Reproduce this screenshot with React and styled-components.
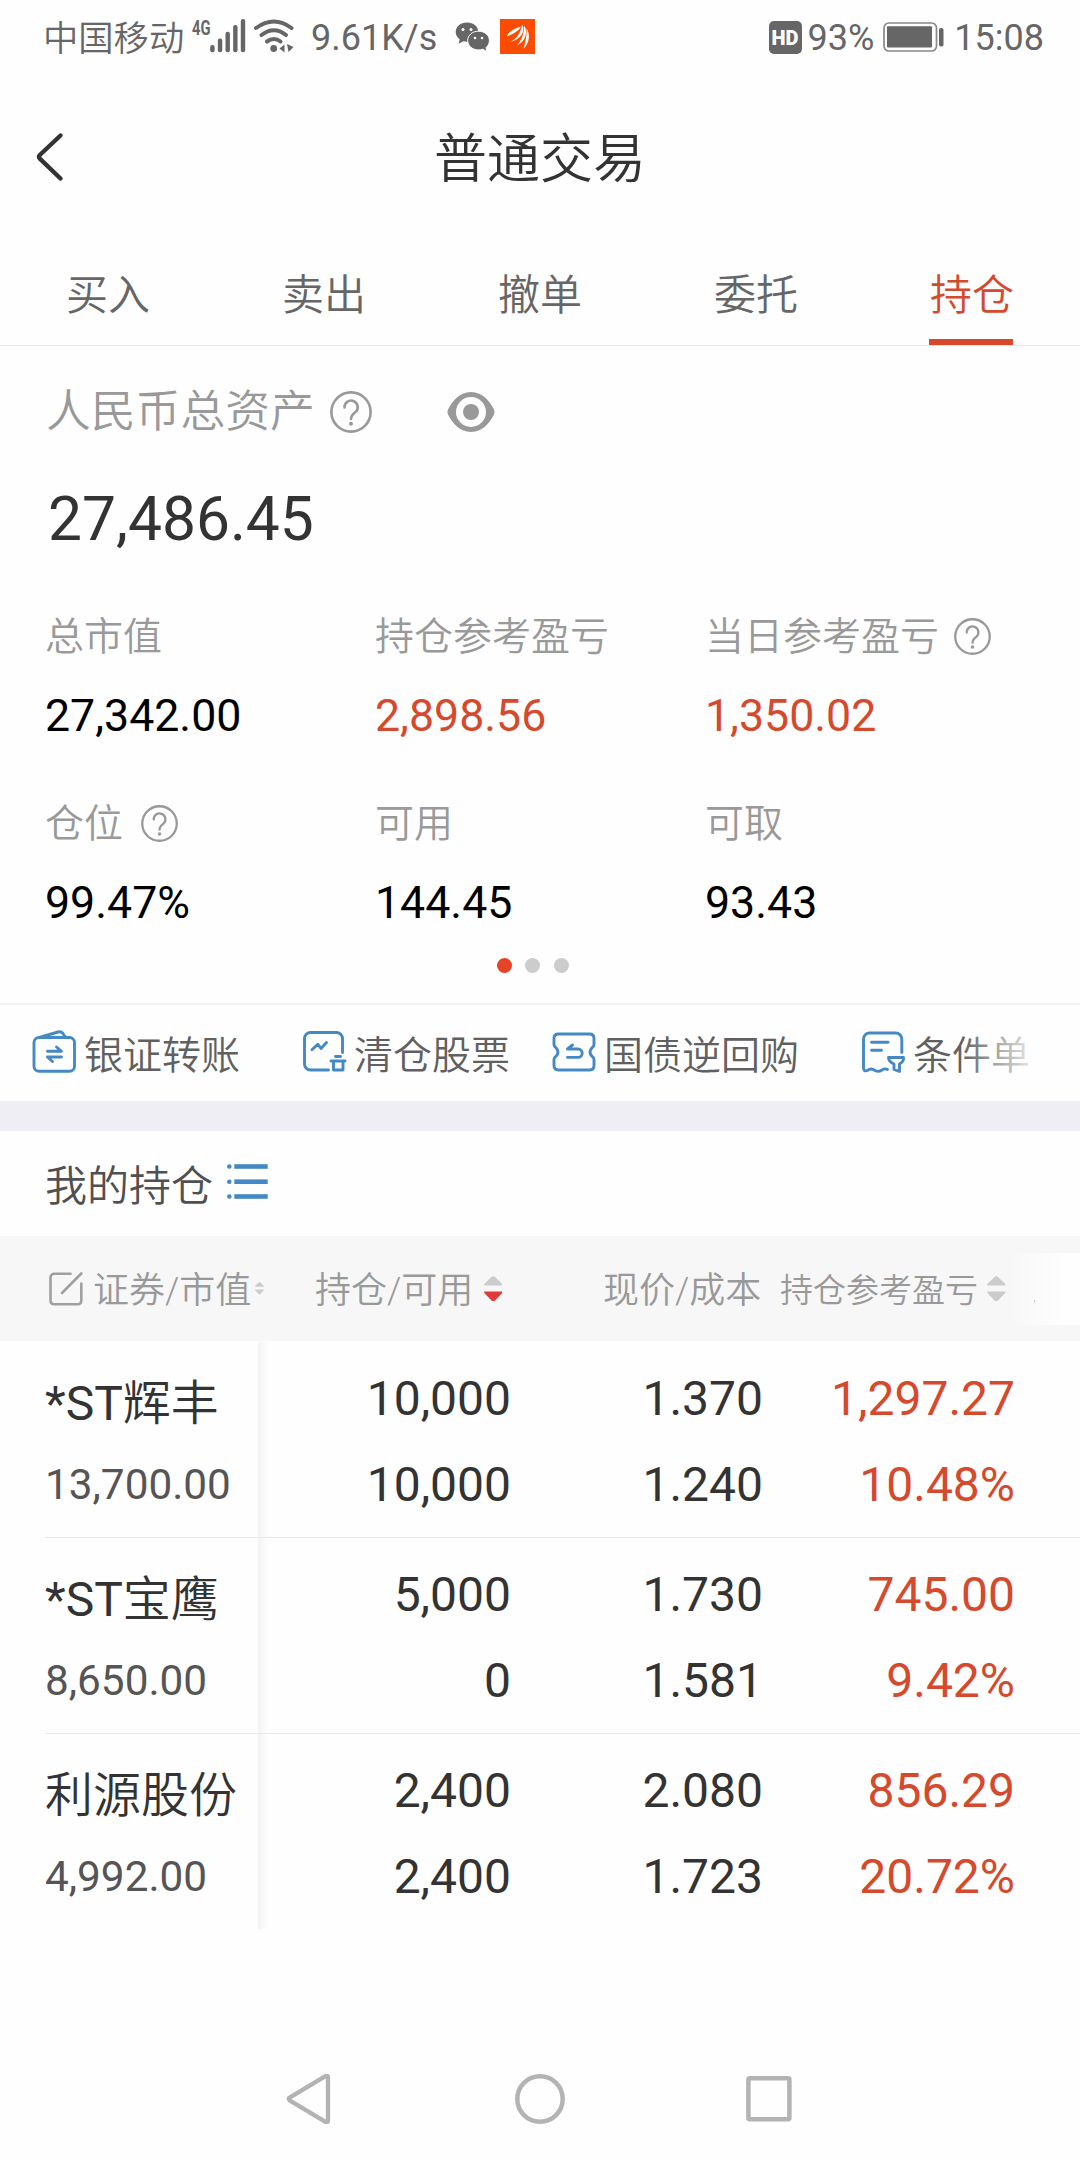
import React from "react";
import styled, { createGlobalStyle } from "styled-components";

const RED = "#d5492d";
const BLUE = "#4489c5";

const GlobalStyle = createGlobalStyle`
  * { box-sizing: border-box; }
  body {
    margin: 0;
    background: #fefefe;
    font-family: Roboto, "Noto Sans CJK SC", sans-serif;
    color: #333;
  }
  svg { display: block; flex: none; }
`;

const Screen = styled.div`
  width: 1080px;
  height: 2160px;
  display: flex;
  flex-direction: column;
  overflow: hidden;
  white-space: nowrap;
`;

/* ---------- status bar ---------- */
const StatusBar = styled.div`
  height: 76px;
  padding: 0 36px 0 43px;
  display: flex;
  align-items: center;
  justify-content: space-between;
  color: #666;
  font-size: 36px;
  line-height: 76px;
`;
const StatusGroup = styled.div`
  display: flex;
  align-items: center;
`;
const Carrier = styled.span`
  width: 147px;
  font-size: 35.3px;
  font-weight: 350;
  padding-top: 1px;
`;
const WifiWrap = styled.span`
  margin-left: 5px;
`;
const Speed = styled.span`
  width: 127px;
  margin: 0 17px 0 16px;
`;
const HdBadge = styled.span`
  width: 33px;
  height: 33px;
  margin-right: 6px;
  margin-bottom: 2px;
  border-radius: 5px;
  background: #666;
  color: #fff;
  font-size: 20px;
  font-weight: 900;
  line-height: 34px;
  text-align: center;
`;
const Charge = styled.span`
  margin-right: 9px;
`;
const Clock = styled.span`
  margin-left: 9px;
`;
const AppBadge = styled.span`
  margin: 0 0 3px 10px;
`;

/* ---------- header ---------- */
const Header = styled.header`
  height: 168px;
  padding: 0 34px;
  display: grid;
  grid-template-columns: 60px 1fr 60px;
  align-items: center;
`;
const Title = styled.h1`
  margin: 0;
  font-size: 53px;
  font-weight: 350;
  line-height: 168px;
  text-align: center;
`;

/* ---------- tabs ---------- */
const Tabs = styled.nav`
  height: 102px;
  display: flex;
  border-bottom: 1px solid #e8e8e8;
`;
const Tab = styled.div`
  flex: 1;
  display: flex;
  flex-direction: column;
  align-items: center;
  padding-top: 8px;
  font-size: 42px;
  font-weight: 350;
  line-height: 87px;
  color: ${(p) => (p.$active ? RED : "#666")};
`;
const TabBar = styled.div`
  width: 84px;
  height: 6px;
  margin-right: 2px;
  background: #d8482b;
`;

/* ---------- account summary ---------- */
const Summary = styled.section`
  height: 657px;
  padding-left: 45px;
`;
const AssetHead = styled.div`
  height: 134px;
  padding-bottom: 3px;
  display: flex;
  align-items: center;
  color: #999;
  font-size: 44.8px;
  font-weight: 350;
`;
const AssetLabel = styled.span`
  width: 285px;
  padding-left: 1px;
  line-height: 60px;
`;
const EyeWrap = styled.span`
  margin-left: 75px;
`;
const Total = styled.div`
  padding-left: 3px;
  font-size: 60.5px;
  line-height: 79px;
`;
const Stats = styled.div`
  margin-top: 48px;
  display: grid;
  grid-template-columns: repeat(3, 330px);
  row-gap: 29px;
`;
const StatLabel = styled.div`
  height: 60px;
  display: flex;
  align-items: center;
  gap: ${(p) => p.$gap || 15}px;
  color: #999;
  font-size: 39px;
  font-weight: 350;
  line-height: 60px;
`;
const StatHelp = styled.span`
  margin-bottom: 2px;
`;
const StatValue = styled.div`
  font-size: 44.7px;
  line-height: 98px;
  color: ${(p) => (p.$up ? RED : "#000")};
`;
const Dots = styled.div`
  margin: 6px 0 0 451.5px;
  display: flex;
  gap: 13.5px;
`;
const Dot = styled.i`
  width: 15px;
  height: 15px;
  border-radius: 50%;
  background: ${(p) => (p.$on ? "#e54427" : "#ccc")};
`;

/* ---------- shortcuts ---------- */
const Shortcuts = styled.section`
  position: relative;
  height: 98px;
  padding-left: 32px;
  display: flex;
  align-items: center;
  border-top: 2px solid #f2f2f2;
  &::after {
    content: "";
    position: absolute;
    top: 0;
    bottom: 0;
    left: 960px;
    right: 0;
    background: linear-gradient(to right, rgba(254, 254, 254, 0), #fefefe 84px);
  }
`;
const Shortcut = styled.div`
  flex: none;
  width: ${(p) => p.$w}px;
  display: flex;
  align-items: center;
  gap: 6px;
`;
const ShortcutText = styled.span`
  padding-top: 6px;
  color: #606060;
  font-size: 39px;
  font-weight: 350;
  line-height: 60px;
`;
const Band = styled.div`
  height: 30px;
  background: #efeef4;
`;

/* ---------- holdings ---------- */
const SectionHead = styled.div`
  height: 105px;
  padding-left: 45px;
  display: flex;
  align-items: center;
  gap: 13px;
`;
const SectionTitle = styled.span`
  width: 169px;
  padding-top: 6px;
  color: #505050;
  font-size: 42px;
  font-weight: 350;
  line-height: 60px;
`;
const ListWrap = styled.span`
  margin-bottom: 3px;
`;
const TableHead = styled.div`
  position: relative;
  height: 105px;
  display: grid;
  grid-template-columns: 315px 288px 177px 1fr;
  align-items: center;
  background: #f7f7f7;
  color: #999;
  font-size: 36px;
  font-weight: 350;
`;
const HeadCell = styled.div`
  display: flex;
  align-items: center;
  gap: ${(p) => p.$gap || 0}px;
  padding-left: ${(p) => p.$pad || 0}px;
  font-size: ${(p) => p.$size || 36}px;
`;
const HeadText = styled.span`
  padding-top: 5px;
  line-height: 50px;
`;
const EditWrap = styled.span`
  margin-right: 6px;
`;
const HeadFade = styled.div`
  position: absolute;
  top: 17px;
  right: 0;
  width: 73px;
  height: 72px;
  background: linear-gradient(to right, rgba(254, 254, 254, 0), #fefefe 60px);
  &::after {
    content: "";
    position: absolute;
    left: 27px;
    top: 47px;
    width: 1px;
    height: 2px;
    background: #ccc;
  }
`;
const Rows = styled.div`
  margin-top: 1px;
`;
const Row = styled.div`
  height: 196px;
  margin-left: 45px;
  padding-top: 14px;
  display: grid;
  grid-template-columns: 213px 253px 252px 252px;
  border-bottom: 1px solid ${(p) => (p.$last ? "transparent" : "#e8e8e8")};
  background: linear-gradient(to right, #f3f3f3, #fefefe) 213px 0 / 10px 100% no-repeat;
`;
const Name = styled.div`
  font-size: 48px;
  font-weight: 350;
  line-height: 95px;
`;
const Mark = styled.span`
  font-weight: 400;
`;
const Market = styled.div`
  color: #555;
  font-size: 42.3px;
  line-height: 68px;
`;
const Figures = styled.div`
  display: flex;
  flex-direction: column;
  font-size: 48px;
  line-height: 86px;
  text-align: right;
  color: ${(p) => (p.$up ? RED : "#333")};
`;

/* ---------- system navigation ---------- */
const SystemNav = styled.div`
  height: 122px;
  margin-top: auto;
  display: flex;
  align-items: center;
  justify-content: center;
  gap: 180px;
`;

/* ---------- icons ---------- */
const Signal = () => (
  <svg width="58" height="56" viewBox="0 -8 58 56" fill="#666">
    <text x="2" y="16.5" fontSize="21" fontWeight="700" textLength="18.5" lengthAdjust="spacingAndGlyphs">4G</text>
    {[27, 20.5, 13.7, 7, 1].map((y, i) => (
      <rect key={i} x={20.2 + i * 7.65} y={y} width="4.4" height={34.3 - y} rx="2" />
    ))}
  </svg>
);
const Wifi = () => (
  <svg width="42" height="40" viewBox="0 0 42 40" fill="none" stroke="#666" strokeWidth="4" strokeLinecap="round">
    <path d="M3 10Q21 -3 38.500 10" />
    <path d="M8.500 17Q21 7.500 33 17" />
    <path d="M14 23.500Q21 18.500 27.500 23.500" />
    <circle cx="20.700" cy="30.500" r="3.400" fill="#666" stroke="none" />
    <path d="M26.500 30.500l5-4v8zM34 26l6.500 3-5 5z" fill="#666" stroke="none" />
  </svg>
);
const Wechat = () => (
  <svg width="35" height="40" viewBox="0 0 35 40">
    <path d="M12 4.500C5.500 4.500.700 8.600.700 14c0 3 1.500 5.500 4 7.200l-1 4.600 4.600-2.600c8 2 15-2.600 15-9.200C23.300 8.600 18.500 4.500 12 4.500Z" fill="#666" />
    <path d="M23.500 13.200c-6.300 0-10.800 4-10.800 9.300s4.600 9.400 10.800 9.400c1.500 0 2.900-.200 4.200-.700l4.300 2.500-1-4c2-1.700 3.400-4.200 3.400-7.200 0-5.300-4.700-9.300-10.900-9.300Z" fill="#666" stroke="#fefefe" strokeWidth="1" />
    <g fill="#fefefe">
      <circle cx="8" cy="11.500" r="1.500" />
      <circle cx="16" cy="11.500" r="1.500" />
      <circle cx="20" cy="20" r="1.300" />
      <circle cx="27" cy="20" r="1.300" />
    </g>
  </svg>
);
const BrokerLogo = () => (
  <svg width="35" height="35" viewBox="0 0 35 35">
    <rect width="35" height="35" fill="#fc4c02" />
    <g fill="#fff">
      <path d="M7 17.500C8 13 14 9.500 21 7.500 18.500 12 14 14.500 7 17.500Z" />
      <path d="M10.500 23C18 18.500 20.500 13 22.300 5.500 25.500 11 22 20 10.500 23Z" />
      <path d="M17 26.500C21.500 21 24 15 24.300 6.500 28 13 26 22 17 26.500Z" />
      <path d="M23.500 30C25 25 27 17 26.500 9.500 30.500 15 29.500 24 23.500 30Z" />
    </g>
  </svg>
);
const Battery = () => (
  <svg width="62" height="32" viewBox="0 0 62 32" fill="none">
    <rect x="1" y="1" width="52.500" height="28" rx="5" stroke="#888" strokeWidth="1.700" />
    <rect x="4" y="4.300" width="45" height="21.200" rx="1" fill="#666" />
    <rect x="56" y="6" width="4.500" height="18.500" rx="2" fill="#666" />
  </svg>
);
const Back = () => (
  <svg width="34" height="56" viewBox="0 0 34 56" fill="none" stroke="#333" strokeWidth="4.400" strokeLinecap="round" strokeLinejoin="round">
    <path d="M26.500 3.500 5.800 23Q4.200 24.800 5.800 26.600L26.500 46.500" />
  </svg>
);
const Help = ({ size }) => (
  <svg width={size} height={size} viewBox="0 0 42 42" fill="none" stroke="#999" strokeWidth="2.600">
    <circle cx="21" cy="21" r="19.600" />
    <path d="M14.500 16.500a6.600 6.600 0 1 1 11.300 4.300Q21 24.500 21 28" strokeLinecap="round" />
    <circle cx="21" cy="32.800" r="2" fill="#999" stroke="none" />
  </svg>
);
const Eye = () => (
  <svg width="48" height="40" viewBox="0 0 48 40">
    <path d="M24 0C36 0 43 10 46.500 16.500Q48.500 20 46.500 23.500C43 30 36 40 24 40S5 30 1.500 23.500Q-.500 20 1.500 16.500C5 10 12 0 24 0Z" fill="#999" />
    <circle cx="24" cy="20" r="15" fill="#fefefe" />
    <circle cx="24" cy="20" r="8" fill="#999" />
  </svg>
);
const BlueIcon = ({ children }) => (
  <svg width="46" height="46" viewBox="0 0 46 46" fill="none" stroke={BLUE} strokeWidth="2.900" strokeLinecap="round" strokeLinejoin="round">
    {children}
  </svg>
);
const TransferIcon = () => (
  <BlueIcon>
    <rect x="2" y="7.500" width="40.500" height="33.800" rx="5" />
    <path d="M9 7 26 2q3-.800 4.500 1L33.500 7" />
    <path d="M15.500 21.300H29.500L24.500 17M29.500 27H15.500L20.500 31.500" />
  </BlueIcon>
);
const ClearedIcon = () => (
  <BlueIcon>
    <path d="M26.500 40H8.500a6 6 0 0 1-6-6V8.500a6 6 0 0 1 6-6H34.500a6 6 0 0 1 6 6V22.500" />
    <path d="M10 19.700 15.800 14.200 19 18.500 24.500 12.500" />
    <path d="M33.500 26.500H38.500M29 31H43M31.500 31V40H41V31" />
  </BlueIcon>
);
const RepoIcon = () => (
  <BlueIcon>
    <path d="M6.500 4H37.500Q42 4 42 8.500V14.500q0 2-2 3.200-4 4.300 0 8.600 2 1.200 2 3.200V35.500Q42 40 37.500 40H6.500Q2 40 2 35.500V29.500q0-2 2-3.200 4-4.300 0-8.600-2-1.200-2-3.200V8.500Q2 4 6.500 4Z" />
    <path d="M20.500 15 15.500 19H26a4.200 4.200 0 0 1 0 8.400H15.500" />
  </BlueIcon>
);
const OrderIcon = () => (
  <BlueIcon>
    <path d="M40.800 22.500V9a6 6 0 0 0-6-6H8.500a6 6 0 0 0-6 6V37.500Q2.500 42 6.500 40.500 10 37.500 14 40.500 17.500 42.500 21 40 24 38 26.500 39.500" />
    <path d="M10.500 12.300H27M10.500 20.300H20.500" />
    <path d="M27.500 27.500H42.500Q43 31.500 38.500 34V41.500L33 39.500V34Q27.500 31.500 27.500 27.500Z" />
  </BlueIcon>
);
const ListIcon = () => (
  <svg width="42" height="38" viewBox="0 0 42 38" fill={BLUE}>
    {[3.5, 18.7, 33.5].map((y) => (
      <g key={y}>
        <circle cx="2.300" cy={y} r="2.300" />
        <rect x="7.300" y={y - 2.3} width="33.400" height="4.600" />
      </g>
    ))}
  </svg>
);
const EditIcon = () => (
  <svg width="34" height="34" viewBox="0 0 34 34" fill="none" stroke="#a0a0a0" strokeWidth="2.600" strokeLinecap="round">
    <path d="M21.500 1.800H5.500Q1.500 1.800 1.500 5.800V28.500Q1.500 32.300 5.500 32.300H28.500Q32.300 32.300 32.300 28.500V11.500" />
    <path d="M32.300 1.500 13 21" />
  </svg>
);
const Sort = ({ w = 18.5, h = 25.5, down = "#ccc" }) => (
  <svg width={w} height={h} viewBox="0 0 18.500 25.500" preserveAspectRatio="none">
    <path d="M0 9.500Q0 8.300 1 7.300L7.500 1Q9.250-.500 11 1L17.500 7.300Q18.500 8.300 18.500 9.500Z" fill="#ccc" />
    <path d="M0 15.500H18.500Q18.500 16.800 17.500 17.800L11 24.500Q9.250 26 7.500 24.500L1 17.800Q0 16.800 0 15.500Z" fill={down} />
  </svg>
);

const tabs = ["买入", "卖出", "撤单", "委托", "持仓"];
const stats = [
  { label: "总市值", value: "27,342.00" },
  { label: "持仓参考盈亏", value: "2,898.56", up: true },
  { label: "当日参考盈亏", value: "1,350.02", up: true, help: true },
  { label: "仓位", value: "99.47%", help: true, gap: 17.5 },
  { label: "可用", value: "144.45" },
  { label: "可取", value: "93.43" },
];
const shortcuts = [
  { label: "银证转账", Icon: TransferIcon, w: 270 },
  { label: "清仓股票", Icon: ClearedIcon, w: 250 },
  { label: "国债逆回购", Icon: RepoIcon, w: 309 },
  { label: "条件单", Icon: OrderIcon, w: 180 },
];
const holdings = [
  { mark: "*ST", name: "辉丰", market: "13,700.00", qty: ["10,000", "10,000"], price: ["1.370", "1.240"], gain: ["1,297.27", "10.48%"] },
  { mark: "*ST", name: "宝鹰", market: "8,650.00", qty: ["5,000", "0"], price: ["1.730", "1.581"], gain: ["745.00", "9.42%"] },
  { name: "利源股份", market: "4,992.00", qty: ["2,400", "2,400"], price: ["2.080", "1.723"], gain: ["856.29", "20.72%"] },
];

const Pair = ({ values, up }) => (
  <Figures $up={up}>
    <span>{values[0]}</span>
    <span>{values[1]}</span>
  </Figures>
);

export default function App() {
  return (
    <Screen>
      <GlobalStyle />
      <StatusBar>
        <StatusGroup>
          <Carrier>中国移动</Carrier>
          <Signal />
          <WifiWrap><Wifi /></WifiWrap>
          <Speed>9.61K/s</Speed>
          <Wechat />
          <AppBadge><BrokerLogo /></AppBadge>
        </StatusGroup>
        <StatusGroup>
          <HdBadge>HD</HdBadge>
          <Charge>93%</Charge>
          <Battery />
          <Clock>15:08</Clock>
        </StatusGroup>
      </StatusBar>

      <Header>
        <Back />
        <Title>普通交易</Title>
      </Header>

      <Tabs>
        {tabs.map((t, i) => (
          <Tab key={t} $active={i === 4}>
            {t}
            {i === 4 && <TabBar />}
          </Tab>
        ))}
      </Tabs>

      <Summary>
        <AssetHead>
          <AssetLabel>人民币总资产</AssetLabel>
          <Help size={42} />
          <EyeWrap><Eye /></EyeWrap>
        </AssetHead>
        <Total>27,486.45</Total>
        <Stats>
          {stats.map((s) => (
            <div key={s.label}>
              <StatLabel $gap={s.gap}>
                {s.label}
                {s.help && <StatHelp><Help size={37} /></StatHelp>}
              </StatLabel>
              <StatValue $up={s.up}>{s.value}</StatValue>
            </div>
          ))}
        </Stats>
        <Dots>
          <Dot $on />
          <Dot />
          <Dot />
        </Dots>
      </Summary>

      <Shortcuts>
        {shortcuts.map(({ label, Icon, w }) => (
          <Shortcut key={label} $w={w}>
            <Icon />
            <ShortcutText>{label}</ShortcutText>
          </Shortcut>
        ))}
      </Shortcuts>
      <Band />

      <SectionHead>
        <SectionTitle>我的持仓</SectionTitle>
        <ListWrap><ListIcon /></ListWrap>
      </SectionHead>
      <TableHead>
        <HeadCell $pad={49} $gap={4}>
          <EditWrap><EditIcon /></EditWrap>
          <HeadText>证券/市值</HeadText>
          <Sort w={9} h={12.5} />
        </HeadCell>
        <HeadCell $gap={10.5}>
          <HeadText>持仓/可用</HeadText>
          <Sort down="#e03a3a" />
        </HeadCell>
        <HeadCell>
          <HeadText>现价/成本</HeadText>
        </HeadCell>
        <HeadCell $gap={9} $size={33}>
          <HeadText>持仓参考盈亏</HeadText>
          <Sort />
        </HeadCell>
        <HeadFade />
      </TableHead>
      <Rows>
        {holdings.map((h, i) => (
          <Row key={h.name} $last={i === holdings.length - 1}>
            <div>
              <Name>
                {h.mark && <Mark>{h.mark}</Mark>}
                {h.name}
              </Name>
              <Market>{h.market}</Market>
            </div>
            <Pair values={h.qty} />
            <Pair values={h.price} />
            <Pair values={h.gain} up />
          </Row>
        ))}
      </Rows>

      <SystemNav>
        <svg width="50" height="50" viewBox="0 0 50 50" fill="none" stroke="#b3b3b3" strokeWidth="4.300" strokeLinejoin="round">
          <path d="M5 23.300Q2.500 25 5 26.700L40.500 47.800Q43 49 43 46.500V3.500Q43 1 40.500 2.200Z" />
        </svg>
        <svg width="50" height="50" viewBox="0 0 50 50" fill="none" stroke="#b3b3b3" strokeWidth="4.500">
          <circle cx="25" cy="25" r="22.700" />
        </svg>
        <svg width="50" height="50" viewBox="0 0 50 50" fill="none" stroke="#b3b3b3" strokeWidth="4.500">
          <rect x="3.400" y="4.300" width="41" height="41" rx="1.500" />
        </svg>
      </SystemNav>
    </Screen>
  );
}
